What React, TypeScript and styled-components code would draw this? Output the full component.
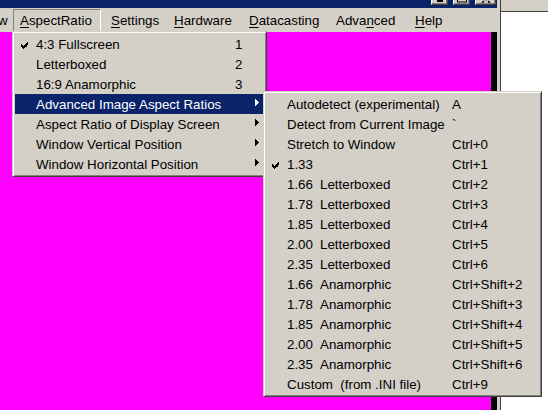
import React from 'react';
import styled, { createGlobalStyle } from 'styled-components';

const FACE = '#d4d0c8';
const NAVY = '#0a246a';
const SHADOW = '#808080';
const DARK = '#404040';

const Global = createGlobalStyle`
  *, *::before, *::after { box-sizing: border-box; }
  html, body { margin: 0; padding: 0; background: #fff; }
  body {
    font-family: "Liberation Sans", Arial, sans-serif;
    font-size: 13.33px;
    color: #000;
  }
`;

const Page = styled.div`
  position: relative;
  width: 548px;
  height: 410px;
  overflow: hidden;
  display: grid;
  grid-template-columns: 501px 47px;
`;

const Window = styled.div`
  display: flex;
  flex-direction: column;
  min-width: 0;
  background: ${FACE};
  padding-right: 3px;
  border-right: 1px solid ${DARK};
`;

const TitleBar = styled.div`
  height: 8px;
  flex: none;
  background: ${NAVY};
  overflow: hidden;
  display: flex;
  justify-content: flex-end;
  align-items: flex-end;
  gap: 5px;
  padding: 0 1px 3px 0;
`;

const CaptionButton = styled.div<{ $w: number }>`
  width: ${p => p.$w}px;
  height: 14px;
  flex: none;
  background: ${FACE};
  border-top: 1px solid #fff;
  border-left: 1px solid #fff;
  border-right: 1px solid ${DARK};
  border-bottom: 1px solid ${DARK};
  box-shadow: inset -1px -1px ${SHADOW};
  display: flex;
  justify-content: center;
  align-items: flex-end;
  padding-bottom: 1px;
`;

const MenuBar = styled.div`
  height: 24px;
  flex: none;
  margin-left: -28px;
  display: flex;
  align-items: flex-start;
  white-space: nowrap;
  background: ${FACE};
`;

const MenuTitle = styled.div<{ $w: number; $active?: boolean }>`
  width: ${p => p.$w}px;
  flex: none;
  height: 23px;
  margin-top: 1px;
  margin-right: ${p => (p.$active ? 3 : 0)}px;
  padding: 1px 0 0 6px;
  line-height: 20px;
  border: 1px solid transparent;
  border-color: ${p => (p.$active ? `${SHADOW} #fff #fff ${SHADOW}` : 'transparent')};
`;

const Acc = styled.span`
  text-decoration: underline;
  text-underline-offset: 2px;
`;

const Content = styled.div`
  flex: 1;
  display: flex;
`;

const Viewport = styled.div`
  flex: 1;
  background: #ff00ff;
`;

const Edge = styled.div`
  width: 6px;
  background: #000;
`;

const Side = styled.div`
  display: flex;
  flex-direction: column;
`;

const SideTop = styled.div`
  height: 12px;
  background: ${FACE};
  border-bottom: 1px solid ${DARK};
`;

const SideBody = styled.div`
  flex: 1;
  background: #fff;
`;

const Popup = styled.div<{ $left: number; $top: number; $w: number }>`
  position: absolute;
  left: ${p => p.$left}px;
  top: ${p => p.$top}px;
  width: ${p => p.$w}px;
  background: ${FACE};
  border: 1px solid;
  border-color: ${FACE} ${DARK} ${DARK} ${FACE};
  box-shadow: inset 1px 1px #fff, inset -1px -1px ${SHADOW};
  padding: 2px;
  white-space: nowrap;
`;

const Row = styled.div<{ $cols: string; $hl?: boolean }>`
  display: grid;
  grid-template-columns: ${p => p.$cols};
  height: 20px;
  line-height: 21px;
  background: ${p => (p.$hl ? NAVY : 'transparent')};
  color: ${p => (p.$hl ? '#fff' : '#000')};
`;

const CheckCell = styled.div`
  display: flex;
  align-items: center;
  padding: 2px 0 0 6px;
`;

const ArrowCell = styled.div`
  display: flex;
  align-items: center;
  padding: 0 0 4px 3px;
`;

const Cell = styled.div``;

const PreCell = styled.div`
  white-space: pre;
`;

const Num = styled.span`
  display: inline-block;
  width: 33px;
`;

const Check = ({ color = '#000' }: { color?: string }) => (
  <svg width="7" height="7" viewBox="0 0 7 7" shapeRendering="crispEdges">
    <path
      fill={color}
      d="M6 0h1v3h-1z M5 1h1v4h-1z M4 2h1v3h-1z M3 3h1v2h-1z M0 2h1v3h-1z M1 3h1v3h-1z M2 4h1v3h-1z M3 4h1v2h-1z"
    />
  </svg>
);

const Arrow = ({ color = '#000' }: { color?: string }) => (
  <svg width="4" height="7" viewBox="0 0 4 7" shapeRendering="crispEdges">
    <path fill={color} d="M0 0h1v7h-1z M1 1h1v5h-1z M2 2h1v3h-1z M3 3h1v1h-1z" />
  </svg>
);

const MAIN_COLS = '21px 199px 17px 12px';
const SUB_COLS = '21px 165px 1fr';

const mainItems: { label: string; key?: string; checked?: boolean; sub?: boolean; hl?: boolean }[] = [
  { label: '4:3 Fullscreen', key: '1', checked: true },
  { label: 'Letterboxed', key: '2' },
  { label: '16:9 Anamorphic', key: '3' },
  { label: 'Advanced Image Aspect Ratios', sub: true, hl: true },
  { label: 'Aspect Ratio of Display Screen', sub: true },
  { label: 'Window Vertical Position', sub: true },
  { label: 'Window Horizontal Position', sub: true },
];

const subItems: { num?: string; label: string; key: string; checked?: boolean }[] = [
  { label: 'Autodetect (experimental)', key: 'A' },
  { label: 'Detect from Current Image', key: '`' },
  { label: 'Stretch to Window', key: 'Ctrl+0' },
  { label: '1.33', key: 'Ctrl+1', checked: true },
  { num: '1.66', label: 'Letterboxed', key: 'Ctrl+2' },
  { num: '1.78', label: 'Letterboxed', key: 'Ctrl+3' },
  { num: '1.85', label: 'Letterboxed', key: 'Ctrl+4' },
  { num: '2.00', label: 'Letterboxed', key: 'Ctrl+5' },
  { num: '2.35', label: 'Letterboxed', key: 'Ctrl+6' },
  { num: '1.66', label: 'Anamorphic', key: 'Ctrl+Shift+2' },
  { num: '1.78', label: 'Anamorphic', key: 'Ctrl+Shift+3' },
  { num: '1.85', label: 'Anamorphic', key: 'Ctrl+Shift+4' },
  { num: '2.00', label: 'Anamorphic', key: 'Ctrl+Shift+5' },
  { num: '2.35', label: 'Anamorphic', key: 'Ctrl+Shift+6' },
  { label: 'Custom  (from .INI file)', key: 'Ctrl+9' },
];

export default function App() {
  return (
    <>
      <Global />
      <Page>
        <Window>
          <TitleBar>
            <CaptionButton $w={17}>
              <svg width="8" height="3" viewBox="0 0 8 3"><rect x="1" y="0" width="6" height="2" fill="#000" /></svg>
            </CaptionButton>
            <CaptionButton $w={17}>
              <svg width="10" height="3" viewBox="0 0 10 3"><rect x="0.5" y="-5" width="9" height="7" fill="none" stroke="#000" /></svg>
            </CaptionButton>
            <CaptionButton $w={21}>
              <svg width="10" height="3" viewBox="0 0 10 3"><path d="M1 -3 L5 0 M9 -3 L5 0 M3 1 L1 3 M7 1 L9 3" stroke="#000" strokeWidth="1.5" /></svg>
            </CaptionButton>
          </TitleBar>
          <MenuBar>
            <MenuTitle $w={41}>View</MenuTitle>
            <MenuTitle $w={88} $active><Acc>A</Acc>spectRatio</MenuTitle>
            <MenuTitle $w={63}><Acc>S</Acc>ettings</MenuTitle>
            <MenuTitle $w={75}><Acc>H</Acc>ardware</MenuTitle>
            <MenuTitle $w={87}><Acc>D</Acc>atacasting</MenuTitle>
            <MenuTitle $w={79}>Adva<Acc>n</Acc>ced</MenuTitle>
            <MenuTitle $w={40}><Acc>H</Acc>elp</MenuTitle>
          </MenuBar>
          <Content>
            <Viewport />
            <Edge />
          </Content>
        </Window>
        <Side>
          <SideTop />
          <SideBody />
        </Side>

        <Popup $left={12} $top={31} $w={255}>
          {mainItems.map((it, i) => (
            <Row key={i} $cols={MAIN_COLS} $hl={it.hl}>
              <CheckCell>{it.checked && <Check color={it.hl ? '#fff' : '#000'} />}</CheckCell>
              <Cell>{it.label}</Cell>
              <Cell>{it.key}</Cell>
              <ArrowCell>{it.sub && <Arrow color={it.hl ? '#fff' : '#000'} />}</ArrowCell>
            </Row>
          ))}
        </Popup>

        <Popup $left={263} $top={91} $w={279}>
          {subItems.map((it, i) => (
            <Row key={i} $cols={SUB_COLS}>
              <CheckCell>{it.checked && <Check />}</CheckCell>
              <PreCell>
                {it.num && <Num>{it.num}</Num>}
                {it.label}
              </PreCell>
              <Cell>{it.key}</Cell>
            </Row>
          ))}
        </Popup>
      </Page>
    </>
  );
}
